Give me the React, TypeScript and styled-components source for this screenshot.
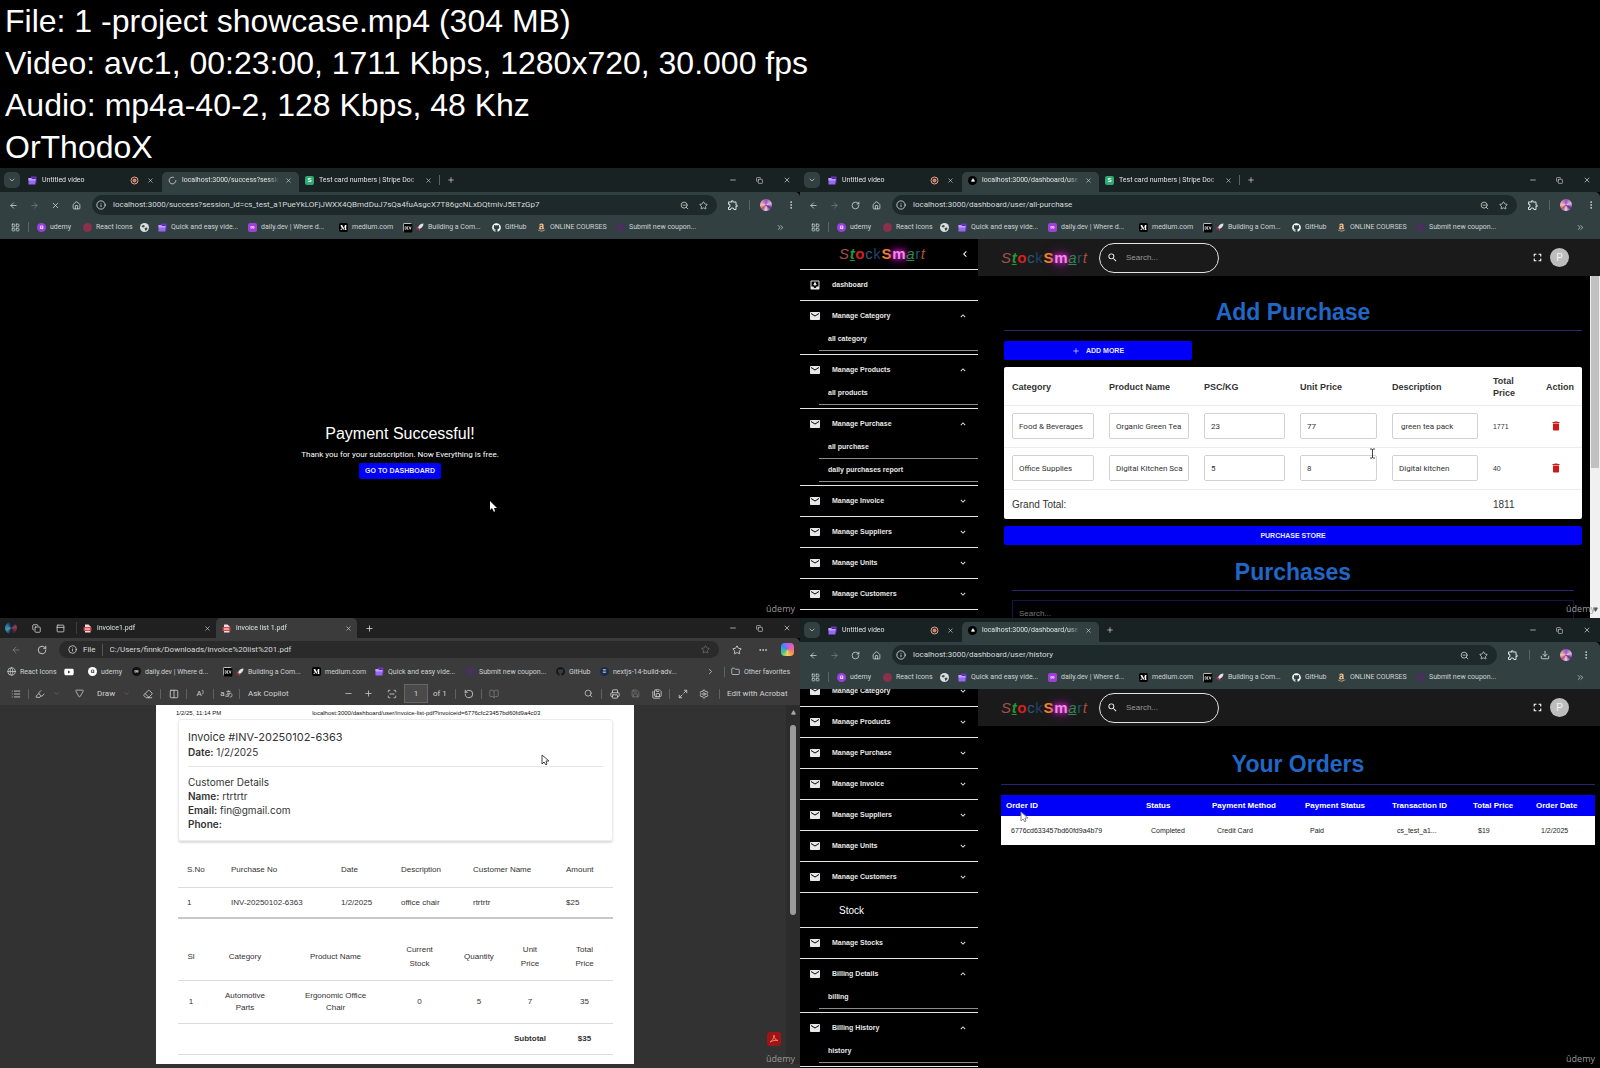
import React from "react";
import styled, { createGlobalStyle, css } from "styled-components";
import {
  ArrowLeft, ArrowRight, X, RotateCw, House, Info, ZoomOut, Star, EllipsisVertical, Ellipsis, Plus, Minus,
  ChevronDown, ChevronRight, ChevronsRight, Copy, Download, LayoutGrid, Globe, Folder, Eraser, Search, Printer,
  Save, SaveAll, Maximize2, Settings, List, Highlighter, PanelTop, RotateCcw, BookOpen, Columns2, Triangle,
  LoaderCircle, ScanLine,
} from "lucide-react";
import {
  MdEmail, MdMoveToInbox, MdExpandLess, MdExpandMore, MdChevronLeft, MdSearch, MdFullscreen, MdDelete,
  MdOutlineExtension,
} from "react-icons/md";
import { FaGithub, FaAmazon, FaYoutube, FaMediumM, FaDev } from "react-icons/fa";

const ui = `Roboto, "Noto Sans", sans-serif`;
const arial = `"Liberation Sans", Arial, sans-serif`;

const Global = createGlobalStyle`
  * { box-sizing: border-box; }
  body { margin: 0; background: #000; color: #fff; font-family: ${arial}; }
  button, input { font: inherit; color: inherit; border: 0; background: none; padding: 0; margin: 0; }
  input { min-width: 0; outline: none; }
  a { color: inherit; text-decoration: none; }
  h1, h2, h3, p { margin: 0; font-weight: 400; }
  svg { display: block; flex: none; }
  table { border-collapse: collapse; table-layout: fixed; width: 100%; }
`;

/* ---------- sheet ---------- */
const FileInfo = styled.header`
  padding-left: 5px;
  font-size: 32px;
  line-height: 42px;
`;
const Sheet = styled.main`
  display: grid;
  grid-template-columns: 1fr 1fr;
`;
const Frame = styled.section`
  position: relative;
  aspect-ratio: 16 / 9;
  min-width: 0;
  overflow: hidden;
  display: flex;
  flex-direction: column;
  background: #000;
`;
const Mark = styled.span`
  position: absolute;
  right: 5px;
  bottom: 3px;
  font: 9px/12px "Open Sans", sans-serif;
  color: #999;
`;
const Pointer = styled.svg<{ $x: number; $y: number }>`
  position: absolute;
  left: ${(p) => p.$x}px;
  top: ${(p) => p.$y}px;
`;

/* ---------- browser parts ---------- */
type Skin = { $edge?: boolean };
const TabStrip = styled.div<Skin>`
  display: flex;
  align-items: flex-end;
  height: ${(p) => (p.$edge ? 20 : 24)}px;
  flex: none;
  background: ${(p) => (p.$edge ? "#202020" : "#182223")};
  color: #dfe3e3;
  font: 7px/12px ${ui};
`;
const StripIcons = styled.div`
  display: flex;
  align-items: center;
  align-self: center;
  gap: 15px;
  width: 77px;
  padding-left: 5px;
  border-right: 1px solid #3d3d3d;
  color: #ddd;
`;
const TabSearch = styled.button`
  display: grid;
  place-items: center;
  width: 16px;
  height: 16px;
  margin: 0 2px 4px 4px;
  border-radius: 5px;
  background: #334041;
`;
const TabBox = styled.div<{ $w: number; $active?: boolean; $edge?: boolean }>`
  display: flex;
  align-items: center;
  gap: 5px;
  width: ${(p) => p.$w}px;
  height: 20px;
  padding: ${(p) => (p.$edge ? "0 4px 0 6px" : "0 6px 4px 6px")};
  border-radius: 5px 5px 0 0;
  background: ${(p) => (p.$active ? (p.$edge ? "#3b3b3b" : "#334041") : "transparent")};
`;
const TabTitle = styled.span`
  flex: 1;
  min-width: 0;
  overflow: hidden;
  white-space: nowrap;
  mask-image: linear-gradient(90deg, #000 90%, transparent);
`;
const IconButton = styled.button<{ $w?: number; $dim?: boolean }>`
  display: grid;
  place-items: center;
  flex: none;
  width: ${(p) => p.$w ?? 21}px;
  height: 16px;
  opacity: ${(p) => (p.$dim ? 0.4 : 1)};
`;
const WindowButtons = styled.div`
  display: flex;
  align-self: center;
  margin-left: auto;
`;
const NewTab = styled(IconButton)`
  align-self: center;
`;
const Toolbar = styled.div<Skin>`
  display: flex;
  align-items: center;
  flex: none;
  height: ${(p) => (p.$edge ? 23 : 26)}px;
  padding-left: 3px;
  background: ${(p) => (p.$edge ? "#3b3b3b" : "#334041")};
  color: #d9dede;
  border-top-right-radius: 5px;
`;
const Omnibox = styled.label<Skin>`
  display: flex;
  align-items: center;
  flex: 1;
  height: ${(p) => (p.$edge ? 17 : 20)}px;
  margin-left: ${(p) => (p.$edge ? 4 : 5)}px;
  padding: 0 4px;
  border-radius: 10px;
  background: ${(p) => (p.$edge ? "#2a2a2a" : "#1d292a")};
  font: 8px/12px ${ui};
  input { flex: 1; margin-left: 7px; color: #d5dada; }
`;
const FileTag = styled.span`
  margin-left: 2px;
  padding-right: 6px;
  border-right: 1px solid #555;
`;
const Rule = styled.span<{ $m?: number }>`
  flex: none;
  width: 1px;
  height: 10px;
  margin: 0 ${(p) => p.$m ?? 4}px;
  background: #596363;
`;
const Bookmarks = styled.nav<Skin>`
  display: flex;
  align-items: center;
  flex: none;
  height: 21px;
  padding: ${(p) => (p.$edge ? "0 9px 0 7px" : "0 9px 3px 11px")};
  background: ${(p) => (p.$edge ? "#3b3b3b" : "#334041")};
  color: #cdd3d3;
  font: 7px/12px ${ui};
`;
const Bookmark = styled.a<{ $w: number }>`
  display: flex;
  align-items: center;
  gap: 4px;
  width: ${(p) => p.$w}px;
  flex: none;
  white-space: nowrap;
`;
const PushRight = styled.span`
  margin-left: auto;
`;
const Badge = styled.span<{ $bg: string; $round?: boolean; $fg?: string }>`
  display: grid;
  place-items: center;
  flex: none;
  width: 9px;
  height: 9px;
  border-radius: ${(p) => (p.$round ? 5 : 2)}px;
  background: ${(p) => p.$bg};
  color: ${(p) => p.$fg ?? "#fff"};
  font: 700 6px/9px ${arial};
`;
const Person = styled.span<{ $edge?: boolean }>`
  width: 12px;
  height: 12px;
  border-radius: 6px;
  background: ${(p) =>
    p.$edge
      ? "conic-gradient(#123 0 10%, #a33a52 20%, #171a2a 50%, #3a9fc0 70%, #2b6f90 85%, #123)"
      : "conic-gradient(#8d4fc0, #e7b6e6 20%, #5d2a86 35%, #e9d6ee 50%, #c04a78 62%, #f0c7a8 75%, #a04fc4)"};
`;
const CopilotMark = styled.span`
  width: 13px;
  height: 13px;
  margin: 0 6px 0 10px;
  border-radius: 4px;
  background: conic-gradient(#b45bf0, #f06a8a 25%, #f3a24a 40%, #f4d35c 50%, #4bc48a 65%, #2f8ff0 85%, #b45bf0);
`;

const Clip = () => (
  <svg width="9" height="9" viewBox="0 0 18 18">
    <path d="M6 1h11v12h-3V5H6z" fill="#6a35c8" />
    <path d="M1 4h5l2 2h7v10a1 1 0 0 1-1 1H2a1 1 0 0 1-1-1z" fill="#9a66f5" />
    <path d="M1 4h5l2 2h7v3H1z" fill="#c3a0ff" />
  </svg>
);
const Rocket = () => (
  <svg width="8" height="8" viewBox="0 0 16 16">
    <path d="M15 1C10 1 6 4 4 9l3 3c5-2 8-6 8-11z" fill="#e6dfe8" />
    <path d="M4 8L1 10l2 1zM8 12l-1 3-2-3zM2 14l3-3" fill="#d0344e" stroke="#d0344e" />
  </svg>
);
const Pdf = () => (
  <svg width="9" height="9" viewBox="0 0 18 18">
    <path d="M4 1h7l4 4v12H4z" fill="#f1dcdc" />
    <rect x="1" y="6" width="16" height="8" rx="1.500" fill="#d8434a" />
    <path d="M4 10h10" stroke="#fff" strokeWidth="2" />
  </svg>
);
const Recording = () => (
  <svg width="9" height="9" viewBox="0 0 18 18">
    <circle cx="9" cy="9" r="7" fill="none" stroke="#e0a58c" strokeWidth="2" />
    <circle cx="9" cy="9" r="4" fill="#d98068" />
  </svg>
);
const World = () => (
  <svg width="9" height="9" viewBox="0 0 18 18">
    <circle cx="9" cy="9" r="9" fill="#d9dddd" />
    <path d="M3 6l4-2 3 2-3 3-3-1zM9 10l5-1 1 3-4 4-1-3z" fill="#3b4647" />
  </svg>
);

function Controls() {
  return (
    <WindowButtons>
      <IconButton $w={27} aria-label="Minimize"><Minus size={8} /></IconButton>
      <IconButton $w={27} aria-label="Restore"><Copy size={7} style={{ transform: "scaleX(-1) rotate(90deg)" }} /></IconButton>
      <IconButton $w={27} aria-label="Close"><X size={8} /></IconButton>
    </WindowButtons>
  );
}

type ChromeProps = { url: string; title: string; loading?: boolean; stripe?: boolean; download?: boolean };
function Chrome({ url, title, loading, stripe, download }: ChromeProps) {
  return (
    <>
      <TabStrip>
        <TabSearch aria-label="Search tabs"><ChevronDown size={8} /></TabSearch>
        <TabBox $w={140}>
          <Clip /><TabTitle>Untitled video</TabTitle><Recording />
          <IconButton $w={12} aria-label="Close tab"><X size={7} /></IconButton>
        </TabBox>
        <TabBox $w={137} $active>
          {loading ? <LoaderCircle size={9} /> : <Badge $bg="#000" $round><Triangle size={4} fill="#fff" /></Badge>}
          <TabTitle>{title}</TabTitle>
          <IconButton $w={9} aria-label="Close tab"><X size={7} /></IconButton>
        </TabBox>
        {stripe && (
          <TabBox $w={140}>
            <Badge $bg="#2fa874">S</Badge><TabTitle>Test card numbers | Stripe Doc</TabTitle>
            <IconButton $w={9} aria-label="Close tab"><X size={7} /></IconButton>
          </TabBox>
        )}
        {stripe && <NewTab as="span" $w={1}><Rule $m={0} /></NewTab>}
        <NewTab aria-label="New tab"><Plus size={8} /></NewTab>
        <Controls />
      </TabStrip>
      <Toolbar>
        <IconButton aria-label="Back"><ArrowLeft size={9} /></IconButton>
        <IconButton $dim aria-label="Forward"><ArrowRight size={9} /></IconButton>
        <IconButton aria-label={loading ? "Stop" : "Reload"}>{loading ? <X size={9} /> : <RotateCw size={9} />}</IconButton>
        <IconButton aria-label="Home"><House size={9} /></IconButton>
        <Omnibox>
          <Info size={10} />
          <input aria-label="Address" defaultValue={url} />
          <IconButton $w={19} aria-label="Zoom"><ZoomOut size={9} /></IconButton>
          <IconButton $w={19} aria-label="Bookmark this page"><Star size={9} /></IconButton>
        </Omnibox>
        <IconButton $w={32} aria-label="Extensions"><MdOutlineExtension size={12} /></IconButton>
        <Rule $m={0} />
        {download && <IconButton $w={30} aria-label="Downloads"><Download size={10} /></IconButton>}
        <IconButton $w={download ? 12 : 32} aria-label="Profile"><Person /></IconButton>
        <IconButton $w={download ? 28 : 18} aria-label="Menu"><EllipsisVertical size={10} /></IconButton>
      </Toolbar>
      <Bookmarks aria-label="Bookmarks">
        <LayoutGrid size={9} />
        <Rule $m={8} />
        <Bookmark $w={46} href="#"><Badge $bg="#9b3fe0" $round>û</Badge>udemy</Bookmark>
        <Bookmark $w={57} href="#"><Badge $bg="#8a2f4c" $round />React Icons</Bookmark>
        <Bookmark $w={18} href="#" aria-label="Site"><World /></Bookmark>
        <Bookmark $w={90} href="#"><Clip />Quick and easy vide...</Bookmark>
        <Bookmark $w={91} href="#"><Badge $bg="#a03fd8">∞</Badge>daily.dev | Where d...</Bookmark>
        <Bookmark $w={64} href="#"><Badge $bg="#000"><FaMediumM size={7} /></Badge>medium.com</Bookmark>
        <Bookmark $w={13} href="#" aria-label="DEV"><Badge $bg="#fff" $fg="#000"><FaDev size={10} /></Badge></Bookmark>
        <Bookmark $w={76} href="#"><Rocket />Building a Com...</Bookmark>
        <Bookmark $w={45} href="#"><FaGithub size={9} color="#fff" />GitHub</Bookmark>
        <Bookmark $w={79} href="#"><FaAmazon size={9} color="#efc08a" />ONLINE COURSES</Bookmark>
        <Bookmark $w={90} href="#"><Badge $bg="#46325a" $round />Submit new coupon...</Bookmark>
        <PushRight><IconButton aria-label="More bookmarks"><ChevronsRight size={9} /></IconButton></PushRight>
      </Bookmarks>
    </>
  );
}

/* ---------- dashboard shell ---------- */
const Shell = styled.div`
  display: grid;
  grid-template-columns: 178px 1fr;
  flex: 1;
  min-height: 0;
`;
const Side = styled.aside<{ $end?: boolean }>`
  display: flex;
  flex-direction: column;
  justify-content: ${(p) => (p.$end ? "flex-end" : "flex-start")};
  min-height: 0;
  overflow: hidden;
  padding-bottom: ${(p) => (p.$end ? 1 : 0)}px;
`;
const SideHead = styled.div`
  display: flex;
  align-items: center;
  justify-content: flex-end;
  flex: none;
  gap: 31px;
  height: 31px;
  padding-right: 6px;
  border-bottom: 1px solid #e6e6e6;
`;
const Group = styled.div<{ $open?: boolean }>`
  flex: none;
  padding-bottom: ${(p) => (p.$open ? 3 : 0)}px;
  border-bottom: 1px solid #e6e6e6;
  font: 700 7px/14px ${arial};
  color: #e8e8e8;
`;
const GroupRow = styled.button<{ $open?: boolean }>`
  display: flex;
  align-items: center;
  width: 100%;
  padding: 8px 10px ${(p) => (p.$open ? 5 : 8)}px 10px;
  text-align: left;
  span { flex: 1; margin-left: 12px; }
`;
const SubLink = styled.a`
  display: block;
  height: 23px;
  margin-left: 19px;
  padding: 4px 9px;
  border-bottom: 1px solid #8d8d8d;
`;
const SideTitle = styled.h3`
  flex: none;
  height: 35px;
  padding-left: 39px;
  border-bottom: 1px solid #e6e6e6;
  font-size: 10px;
  line-height: 35px;
`;
const Page = styled.div`
  display: flex;
  flex-direction: column;
  min-width: 0;
  min-height: 0;
`;
const TopBar = styled.div`
  display: flex;
  align-items: center;
  flex: none;
  height: 37px;
  padding: 0 31px 0 23px;
  background: #1a1a1a;
`;
const SearchPill = styled.label`
  display: flex;
  align-items: center;
  width: 120px;
  height: 30px;
  margin-left: 10px;
  padding: 0 7px;
  border: 1px solid #e4e4e4;
  border-radius: 15px;
  font-size: 8px;
  input { flex: 1; margin-left: 8px; }
  input::placeholder { color: #999; opacity: 1; }
`;
const Avatar = styled.span`
  display: grid;
  place-items: center;
  width: 19px;
  height: 19px;
  margin-left: 6px;
  border-radius: 10px;
  background: #bdbdbd;
  color: #f4f4f4;
  font-size: 10px;
`;
const Wordmark = styled.span`
  display: flex;
  align-items: baseline;
  justify-content: space-between;
  width: 86px;
  margin-right: 2px;
  font: 15px/20px ${arial};
`;
const Letter = styled.span<{ $c: string; $b?: boolean; $i?: boolean; $u?: boolean; $glow?: boolean }>`
  color: ${(p) => p.$c};
  font-weight: ${(p) => (p.$b ? 700 : 400)};
  font-style: ${(p) => (p.$i ? "italic" : "normal")};
  text-decoration: ${(p) => (p.$u ? "underline" : "none")};
  ${(p) => p.$glow && css`text-shadow: 0 0 5px #e020d8, 0 0 9px #c018c0, 0 0 14px #a010a0;`}
`;
const Logo = () => (
  <Wordmark>
    <Letter $c="#a0504a" $i>S</Letter>
    <Letter $c="#1f9a36" $b $i $u>t</Letter>
    <Letter $c="#d8201c" $b>o</Letter>
    <Letter $c="#2b5d78">c</Letter>
    <Letter $c="#223f6e">k</Letter>
    <Letter $c="#f08a24" $b>S</Letter>
    <Letter $c="#f08ae8" $b $glow>m</Letter>
    <Letter $c="#2a8a4a" $i $u>a</Letter>
    <Letter $c="#1f5568">r</Letter>
    <Letter $c="#b04a3a" $i>t</Letter>
  </Wordmark>
);

type Item = { name: string; sub?: string[] };
function Menu({ items }: { items: Item[] }) {
  return (
    <>
      {items.map((it) => (
        <Group key={it.name} $open={!!it.sub}>
          <GroupRow $open={!!it.sub} aria-expanded={!!it.sub}>
            {it.name === "dashboard"
              ? <MdMoveToInbox size={10} viewBox="2 2 20 20" />
              : <MdEmail size={10} viewBox="2 2 20 20" />}
            <span>{it.name}</span>
            {it.name !== "dashboard" && (it.sub ? <MdExpandLess size={10} /> : <MdExpandMore size={10} />)}
          </GroupRow>
          {it.sub?.map((s) => <SubLink key={s} href="#">{s}</SubLink>)}
        </Group>
      ))}
    </>
  );
}
function Bar() {
  return (
    <TopBar>
      <Logo />
      <SearchPill>
        <MdSearch size={11} />
        <input aria-label="Search" placeholder="Search..." />
      </SearchPill>
      <PushRight><IconButton $w={13} aria-label="Full screen"><MdFullscreen size={13} /></IconButton></PushRight>
      <Avatar>P</Avatar>
    </TopBar>
  );
}

/* ---------- payment page ---------- */
const Paid = styled.div`
  display: flex;
  flex-direction: column;
  align-items: center;
  justify-content: center;
  flex: 1;
  padding-top: 43px;
  h1 { font-size: 16px; line-height: 26px; }
  p { font: 8px/16px Roboto, sans-serif; }
`;
const BlueButton = styled.button<{ $w?: string; $h: number }>`
  display: flex;
  align-items: center;
  justify-content: center;
  gap: 6px;
  width: ${(p) => p.$w ?? "100%"};
  height: ${(p) => p.$h}px;
  border-radius: 2px;
  background: #0000fa;
  color: #e6e6ff;
  font: 700 7px/12px ${arial};
`;

/* ---------- purchase page ---------- */
const Scroller = styled.div`
  display: flex;
  flex: 1;
  min-height: 0;
`;
const Content = styled.div<{ $orders?: boolean }>`
  flex: 1;
  min-width: 0;
  overflow: hidden;
  padding: ${(p) => (p.$orders ? "22px 5px 0 23px" : "20px 8px 0 26px")};
`;
const Heading = styled.h1<{ $gap: number }>`
  padding-bottom: ${(p) => p.$gap}px;
  border-bottom: 1px solid #26266e;
  color: #2067c6;
  font: 700 23px/32px ${arial};
  text-align: center;
`;
const Stack = styled.div<{ $top: number; $inset?: number }>`
  padding: ${(p) => p.$top}px ${(p) => p.$inset ?? 0}px 0;
`;
const Purchase = styled.table`
  border-radius: 2px;
  background: #fff;
  color: #333;
  font-size: 8px;
  th { height: 38px; padding: 2px 7px 0 8px; font: 700 9px/12px ${arial}; text-align: left; }
  td { height: 42px; padding: 0 7px 0 8px; border-top: 1px solid #ececec; }
  tfoot td { height: 30px; font-size: 10px; }
  td:nth-child(6) { font-size: 7px; }
`;
const Field = styled.input`
  width: 100%;
  height: 26px;
  padding: 0 5px 0 6px;
  border: 1px solid #d2d2d2;
  border-radius: 2px;
  font-family: Roboto, sans-serif;
`;
const SearchField = styled.input`
  width: 100%;
  height: 26px;
  padding: 0 6px;
  border: 1px solid #14144a;
  font-size: 8px;
  &::placeholder { color: #777; opacity: 1; }
`;
const Track = styled.div`
  display: flex;
  flex-direction: column;
  align-items: center;
  justify-content: space-between;
  width: 10px;
  background: #f0f0f0;
  padding-bottom: 6px;
  color: #555;
`;
const Thumb = styled.span`
  width: 8px;
  height: 57%;
  background: #c1c1c1;
`;
const purchaseCols = [97, 95, 96, 92, 101, 53, 44];
const purchases = [
  ["Food & Beverages", "Organic Green Tea", "23", "77", " green tea pack", "1771"],
  ["Office Supplies", "Digital Kitchen Scale", "5", "8", "Digital kitchen", "40"],
];
const purchaseHeads = ["Category", "Product Name", "PSC/KG", "Unit Price", "Description", "Total Price", "Action"];

/* ---------- orders page ---------- */
const Orders = styled.table`
  background: #fff;
  color: #222;
  th { height: 21px; padding: 0 5px; background: #0000fa; color: #fff; font: 700 8px/12px ${arial}; text-align: left; white-space: nowrap; }
  td { height: 29px; padding: 0 10px; font-size: 7px; white-space: nowrap; }
`;
const orderCols = [140, 66, 93, 87, 81, 63, 64];
const Cols = ({ list }: { list: number[] }) => {
  const sum = list.reduce((a, b) => a + b, 0);
  return <colgroup>{list.map((w, i) => <col key={i} style={{ width: `${(w / sum) * 100}%` }} />)}</colgroup>;
};

/* ---------- pdf viewer ---------- */
const PdfBar = styled.div`
  display: flex;
  align-items: center;
  flex: none;
  height: 23px;
  padding: 0 9px 0 4px;
  background: #3b3b3b;
  color: #d0d0d0;
  font: 8px/12px ${ui};
`;
const BarText = styled.button<{ $w: number }>`
  width: ${(p) => p.$w}px;
  flex: none;
  text-align: left;
  white-space: nowrap;
`;
const PageNumber = styled.input`
  width: 24px;
  height: 19px;
  margin-right: 5px;
  border: 1px solid #666;
  background: #4a4a4a;
  text-align: center;
`;
const Viewer = styled.div`
  position: relative;
  display: grid;
  grid-template-columns: 156fr 478fr 166fr;
  flex: 1;
  min-height: 0;
  padding-bottom: 4px;
  background: #323232;
`;
const Paper = styled.article`
  grid-column: 2;
  overflow: hidden;
  padding: 3px 21px 0 22px;
  background: #fff;
  color: #333;
  font-size: 8px;
`;
const PrintHead = styled.div`
  display: flex;
  gap: 91px;
  margin: 0 -2px;
  font: 6px/10px ${arial};
  color: #111;
  span { white-space: nowrap; }
`;
const Card = styled.section`
  margin-top: 1px;
  padding: 9px;
  border: 1px solid #ececec;
  border-radius: 3px;
  box-shadow: 0 2px 2px #ddd;
  font: 10px/14px Inter, sans-serif;
  h2 { font-size: 11px; line-height: 16px; }
  b { font-weight: 600; }
`;
const CardSplit = styled.hr`
  margin: 7px 0 8px;
  border: 0;
  border-top: 1px solid #e6e6e6;
`;
const Invoice = styled.table`
  margin-top: 12px;
  border-bottom: 2px solid #c8c8c8;
  th { height: 34px; padding: 0 0 0 9px; font-weight: 400; text-align: left; }
  td { height: 31px; padding: 0 0 0 9px; border-top: 1px solid #dcdcdc; }
`;
const Lines = styled.table`
  margin-top: 15px;
  border-bottom: 1px solid #dcdcdc;
  text-align: center;
  white-space: pre-line;
  th { height: 46px; padding: 0; font-weight: 400; line-height: 14px; }
  td { height: 43px; padding: 0; border-top: 1px solid #dcdcdc; line-height: 12px; }
  tfoot td { height: 31px; font-weight: 700; }
`;
const ViewerTrack = styled.div`
  display: flex;
  flex-direction: column;
  align-items: center;
  justify-self: end;
  gap: 10px;
  width: 14px;
  padding-top: 5px;
  background: #2c2c2c;
`;
const ViewerThumb = styled.span`
  width: 6px;
  height: 190px;
  border-radius: 3px;
  background: #9b9b9b;
`;
const AcrobatButton = styled.button`
  position: absolute;
  right: 19px;
  bottom: 22px;
  display: grid;
  place-items: center;
  width: 14px;
  height: 14px;
  border-radius: 3px;
  background: #a01414;
`;

function EdgeFrame() {
  return (
    <Frame>
      <TabStrip $edge>
        <StripIcons><Person $edge /><Copy size={9} /><PanelTop size={9} /></StripIcons>
        <TabBox $w={139} $edge>
          <Pdf /><TabTitle>invoice1.pdf</TabTitle>
          <IconButton $w={9} aria-label="Close tab"><X size={7} /></IconButton>
        </TabBox>
        <TabBox $w={141} $active $edge>
          <Pdf /><TabTitle>invoice list 1.pdf</TabTitle>
          <IconButton $w={9} aria-label="Close tab"><X size={7} /></IconButton>
        </TabBox>
        <NewTab $w={24} aria-label="New tab"><Plus size={9} /></NewTab>
        <Controls />
      </TabStrip>
      <Toolbar $edge>
        <IconButton $w={26} $dim aria-label="Back"><ArrowLeft size={10} /></IconButton>
        <IconButton $w={26} aria-label="Refresh"><RotateCw size={10} /></IconButton>
        <Omnibox $edge>
          <IconButton as="span" $w={18}><Info size={9} /></IconButton>
          <FileTag>File</FileTag>
          <input aria-label="Address" defaultValue="C:/Users/finnk/Downloads/invoice%20list%201.pdf" />
          <IconButton $w={19} $dim aria-label="Favorite"><Star size={9} /></IconButton>
        </Omnibox>
        <IconButton $w={36} aria-label="Favorites"><Star size={10} /></IconButton>
        <IconButton $w={16} aria-label="Settings and more"><Ellipsis size={10} /></IconButton>
        <CopilotMark />
      </Toolbar>
      <Bookmarks $edge aria-label="Favorites">
        <Bookmark $w={57} href="#"><Globe size={9} />React Icons</Bookmark>
        <Bookmark $w={24} href="#" aria-label="YouTube"><FaYoutube size={10} color="#fff" /></Bookmark>
        <Bookmark $w={44} href="#"><Badge $bg="#fff" $fg="#222" $round>û</Badge>udemy</Bookmark>
        <Bookmark $w={91} href="#"><Badge $bg="#111" $round>∞</Badge>daily.dev | Where d...</Bookmark>
        <Bookmark $w={13} href="#" aria-label="DEV"><Badge $bg="#fff" $fg="#000"><FaDev size={10} /></Badge></Bookmark>
        <Bookmark $w={76} href="#"><Rocket />Building a Com...</Bookmark>
        <Bookmark $w={63} href="#"><Badge $bg="#000"><FaMediumM size={7} /></Badge>medium.com</Bookmark>
        <Bookmark $w={91} href="#"><Clip />Quick and easy vide...</Bookmark>
        <Bookmark $w={90} href="#"><Badge $bg="#46325a" $round />Submit new coupon...</Bookmark>
        <Bookmark $w={44} href="#"><FaGithub size={9} color="#111" />GitHub</Bookmark>
        <Bookmark $w={102} href="#"><Badge $bg="#1a2c4c" $round>≡</Badge>nextjs-14-build-adv...</Bookmark>
        <IconButton $w={16} aria-label="More favorites"><ChevronRight size={9} /></IconButton>
        <Rule $m={6} />
        <Bookmark $w={60} href="#"><Folder size={9} />Other favorites</Bookmark>
      </Bookmarks>
      <PdfBar>
        <IconButton $w={24} aria-label="Contents"><List size={10} /></IconButton>
        <Rule $m={0} />
        <IconButton $w={22} aria-label="Highlight"><Highlighter size={10} /></IconButton>
        <IconButton $w={10} $dim aria-label="Highlight colors"><ChevronDown size={7} /></IconButton>
        <IconButton $w={36} aria-label="Pen"><Triangle size={9} style={{ transform: "rotate(180deg)" }} /></IconButton>
        <BarText $w={20}>Draw</BarText>
        <IconButton $w={18} $dim aria-label="Pen settings"><ChevronDown size={7} /></IconButton>
        <IconButton $w={25} aria-label="Erase"><Eraser size={10} /></IconButton>
        <Rule $m={0} />
        <IconButton $w={25} aria-label="Add text"><Columns2 size={10} /></IconButton>
        <Rule $m={0} />
        <IconButton $w={26} aria-label="Read aloud">A⁾</IconButton>
        <Rule $m={0} />
        <IconButton $w={25} aria-label="Translate">aあ</IconButton>
        <Rule $m={0} />
        <IconButton as="span" $w={8} />
        <BarText $w={90}>Ask Copilot</BarText>
        <IconButton $w={20} aria-label="Zoom out"><Minus size={9} /></IconButton>
        <IconButton $w={21} aria-label="Zoom in"><Plus size={9} /></IconButton>
        <IconButton $w={25} aria-label="Fit to page"><ScanLine size={10} /></IconButton>
        <PageNumber aria-label="Page" defaultValue="1" />
        <span>of 1</span>
        <Rule $m={8} />
        <IconButton $w={10} aria-label="Rotate"><RotateCcw size={10} /></IconButton>
        <Rule $m={7} />
        <IconButton $w={10} $dim aria-label="Page view"><BookOpen size={10} /></IconButton>
        <PushRight><IconButton $w={26} aria-label="Find"><Search size={9} /></IconButton></PushRight>
        <Rule $m={0} />
        <IconButton $w={25} aria-label="Print"><Printer size={10} /></IconButton>
        <IconButton $w={17} $dim aria-label="Save"><Save size={9} /></IconButton>
        <IconButton $w={25} aria-label="Save as"><SaveAll size={10} /></IconButton>
        <Rule $m={0} />
        <IconButton $w={25} aria-label="Full screen"><Maximize2 size={10} /></IconButton>
        <IconButton $w={17} aria-label="Settings"><Settings size={10} /></IconButton>
        <Rule $m={7} />
        <BarText $w={64}>Edit with Acrobat</BarText>
      </PdfBar>
      <Viewer>
        <Paper>
          <PrintHead>
            <span>1/2/25, 11:14 PM</span>
            <span>localhost:3000/dashboard/user/invoice-list-pdf?invoiceid=6776cfc23457bd60fd9a4c03</span>
          </PrintHead>
          <Card>
            <h2>Invoice #INV-20250102-6363</h2>
            <p><b>Date:</b> 1/2/2025</p>
            <CardSplit />
            <p>Customer Details</p>
            <p><b>Name:</b> rtrtrtr</p>
            <p><b>Email:</b> fin@gmail.com</p>
            <p><b>Phone:</b></p>
          </Card>
          <Invoice>
            <Cols list={[44, 110, 60, 72, 93, 56]} />
            <thead><tr>{["S.No", "Purchase No", "Date", "Description", "Customer Name", "Amount"].map((h) => <th key={h}>{h}</th>)}</tr></thead>
            <tbody><tr>{["1", "INV-20250102-6363", "1/2/2025", "office chair", "rtrtrtr", "$25"].map((h) => <td key={h}>{h}</td>)}</tr></tbody>
          </Invoice>
          <Lines>
            <Cols list={[26, 82, 99, 69, 50, 52, 57]} />
            <thead><tr>{["Sl", "Category", "Product Name", "Current\nStock", "Quantity", "Unit\nPrice", "Total\nPrice"].map((h) => <th key={h}>{h}</th>)}</tr></thead>
            <tbody><tr>{["1", "Automotive\nParts", "Ergonomic Office\nChair", "0", "5", "7", "35"].map((h, i) => <td key={i}>{h}</td>)}</tr></tbody>
            <tfoot><tr><td colSpan={5} /><td>Subtotal</td><td>$35</td></tr></tfoot>
          </Lines>
        </Paper>
        <ViewerTrack><Triangle size={5} fill="#aaa" color="#aaa" /><ViewerThumb /></ViewerTrack>
        <AcrobatButton aria-label="Open in Acrobat">
          <svg width="10" height="10" viewBox="0 0 20 20" fill="none" stroke="#f08a80" strokeWidth="1.800">
            <path d="M2 16c5-2 8-8 8-14 0 7 3 10 8 11-5-1-11 0-16 3z" />
          </svg>
        </AcrobatButton>
      </Viewer>
      <Pointer $x={541} $y={136} width="9" height="12" viewBox="0 0 9 12">
        <path d="M1 1v9l2-2 2 3 1-1-1-3h3z" fill="#fff" stroke="#444" />
      </Pointer>
      <Mark>ûdemy</Mark>
    </Frame>
  );
}

export default function App() {
  return (
    <>
      <Global />
      <FileInfo>
        <div>File: 1 -project showcase.mp4 (304 MB)</div>
        <div>Video: avc1, 00:23:00, 1711 Kbps, 1280x720, 30.000 fps</div>
        <div>Audio: mp4a-40-2, 128 Kbps, 48 Khz</div>
        <div>OrThodoX</div>
      </FileInfo>
      <Sheet>
        <Frame>
          <Chrome
            loading stripe
            title="localhost:3000/success?session"
            url="localhost:3000/success?session_id=cs_test_a1PueYkLOFjJWXX4QBmdDuJ7sQa4fuAsgcX7T86gcNLxDQtmlvJ5ETzGp7"
          />
          <Paid>
            <h1>Payment Successful!</h1>
            <p>Thank you for your subscription. Now Everything is free.</p>
            <BlueButton $w="82px" $h={16}>GO TO DASHBOARD</BlueButton>
          </Paid>
          <Pointer $x={489} $y={332} width="9" height="13" viewBox="0 0 9 13">
            <path d="M1 1v9l2-2 2 4 1-1-1-3h3z" fill="#fff" />
          </Pointer>
          <Mark>ûdemy</Mark>
        </Frame>

        <Frame>
          <Chrome stripe title="localhost:3000/dashboard/use" url="localhost:3000/dashboard/user/all-purchase" />
          <Shell>
            <Side>
              <SideHead>
                <Logo />
                <IconButton $w={14} aria-label="Collapse menu"><MdChevronLeft size={12} /></IconButton>
              </SideHead>
              <Menu
                items={[
                  { name: "dashboard" },
                  { name: "Manage Category", sub: ["all category"] },
                  { name: "Manage Products", sub: ["all products"] },
                  { name: "Manage Purchase", sub: ["all purchase", "daily purchases report"] },
                  { name: "Manage Invoice" },
                  { name: "Manage Suppliers" },
                  { name: "Manage Units" },
                  { name: "Manage Customers" },
                ]}
              />
            </Side>
            <Page>
              <Bar />
              <Scroller>
                <Content>
                  <Heading $gap={2}>Add Purchase</Heading>
                  <Stack $top={10}><BlueButton $w="188px" $h={19}><Plus size={8} />ADD MORE</BlueButton></Stack>
                  <Stack $top={7}>
                    <Purchase>
                      <Cols list={purchaseCols} />
                      <thead><tr>{purchaseHeads.map((h) => <th key={h}>{h}</th>)}</tr></thead>
                      <tbody>
                        {purchases.map((row) => (
                          <tr key={row[0]}>
                            {row.slice(0, 5).map((v, i) => (
                              <td key={i}><Field aria-label={purchaseHeads[i]} defaultValue={v} /></td>
                            ))}
                            <td>{row[5]}</td>
                            <td><IconButton aria-label="Delete row"><MdDelete size={12} color="#d01818" /></IconButton></td>
                          </tr>
                        ))}
                      </tbody>
                      <tfoot><tr><td colSpan={5}>Grand Total:</td><td>1811</td><td /></tr></tfoot>
                    </Purchase>
                  </Stack>
                  <Stack $top={7}><BlueButton $h={19}>PURCHASE STORE</BlueButton></Stack>
                  <Stack $top={11} $inset={8}>
                    <Heading as="h2" $gap={2}>Purchases</Heading>
                    <Stack $top={9}><SearchField aria-label="Search purchases" placeholder="Search..." /></Stack>
                  </Stack>
                </Content>
                <Track><Thumb /><Triangle size={5} fill="#555" style={{ transform: "rotate(180deg)" }} /></Track>
              </Scroller>
            </Page>
          </Shell>
          <Pointer $x={569} $y={280} width="7" height="11" viewBox="0 0 7 11">
            <path d="M1 1h2M4 1h2M3.500 1v9M1 10h2M4 10h2" stroke="#444" fill="none" />
          </Pointer>
          <Mark>ûdemy</Mark>
        </Frame>

        <EdgeFrame />

        <Frame>
          <Chrome download title="localhost:3000/dashboard/use" url="localhost:3000/dashboard/user/history" />
          <Shell>
            <Side $end>
              <Menu
                items={[
                  { name: "Manage Category" },
                  { name: "Manage Products" },
                  { name: "Manage Purchase" },
                  { name: "Manage Invoice" },
                  { name: "Manage Suppliers" },
                  { name: "Manage Units" },
                  { name: "Manage Customers" },
                ]}
              />
              <SideTitle>Stock</SideTitle>
              <Menu
                items={[
                  { name: "Manage Stocks" },
                  { name: "Billing Details", sub: ["billing"] },
                  { name: "Billing History", sub: ["history"] },
                ]}
              />
            </Side>
            <Page>
              <Bar />
              <Content $orders>
                <Heading $gap={4}>Your Orders</Heading>
                <Stack $top={10}>
                  <Orders>
                    <Cols list={orderCols} />
                    <thead>
                      <tr>{["Order ID", "Status", "Payment Method", "Payment Status", "Transaction ID", "Total Price", "Order Date"].map((h) => <th key={h}>{h}</th>)}</tr>
                    </thead>
                    <tbody>
                      <tr>{["6776cd633457bd60fd9a4b79", "Completed", "Credit Card", "Paid", "cs_test_a1...", "$19", "1/2/2025"].map((h) => <td key={h}>{h}</td>)}</tr>
                    </tbody>
                  </Orders>
                </Stack>
              </Content>
            </Page>
          </Shell>
          <Pointer $x={220} $y={193} width="9" height="12" viewBox="0 0 9 12">
            <path d="M1 1v9l2-2 2 3 1-1-1-3h3z" fill="#fff" stroke="#888" />
          </Pointer>
          <Mark>ûdemy</Mark>
        </Frame>
      </Sheet>
    </>
  );
}
